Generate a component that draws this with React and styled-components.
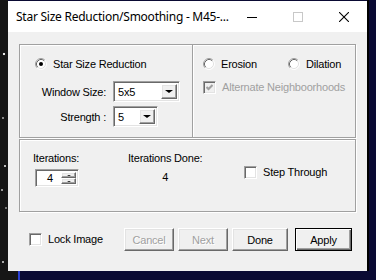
import React from 'react'
import styled, { createGlobalStyle, css } from 'styled-components'

const GlobalStyle = createGlobalStyle`
    html, body {
        margin: 0;
        padding: 0;
        background: #0a0a33;
        overflow: hidden;
    }
    * { box-sizing: border-box; }
`

const Desktop = styled.div`
    width: 376px;
    height: 280px;
    display: flex;
    flex-direction: column;
    background: #0a0a33;
    font-family: 'Liberation Sans', Arial, sans-serif;
    font-size: 11px;
    letter-spacing: -0.2px;
    color: #000;
`

const TopRow = styled.div`
    display: flex;
    height: 271px;
`

const Stars = styled.div`
    width: ${p => p.$width}px;
    flex: none;
    background-color: #161616;
    background-image:
        radial-gradient(circle at 4px 54px, #e8e8e8 0 1px, transparent 1.6px),
        radial-gradient(circle at 3px 118px, #888 0 0.8px, transparent 1.3px),
        radial-gradient(circle at 5px 166px, #bbb 0 0.8px, transparent 1.3px),
        radial-gradient(circle at 2px 190px, #999 0 0.8px, transparent 1.3px),
        radial-gradient(circle at 6px 208px, #777 0 0.8px, transparent 1.3px),
        radial-gradient(circle at 3px 262px, #aaa 0 0.8px, transparent 1.3px);
    background-repeat: no-repeat;
`

const Window = styled.div`
    width: 359px;
    margin-top: 1px;
    display: flex;
    flex-direction: column;
    background: #f0f0f0;
`

const RightEdge = styled.div`
    flex: 1;
    border-left: 2px solid #000;
    background: #0a0a33;
`

const BottomRow = styled.div`
    flex: 1;
    display: flex;
`

const BlueLine = styled.div`
    width: 2px;
    background: #2a3fd0;
`

const TitleBar = styled.div`
    height: 31px;
    flex: none;
    display: flex;
    align-items: center;
    background: #fff;
`

const Title = styled.div`
    flex: 1;
    padding-left: 8px;
    font-family: 'Noto Sans', 'Open Sans', sans-serif;
    font-size: 12px;
    letter-spacing: -0.25px;
    white-space: nowrap;
    overflow: hidden;
`

const CaptionButton = styled.div`
    width: 46px;
    height: 31px;
    display: flex;
    align-items: center;
    justify-content: center;
`

const Body = styled.div`
    flex: 1;
    padding: 12px 11px 0 11px;
    display: flex;
    flex-direction: column;
`

const GroupBox = styled.div`
    border: 1px solid #a0a0a0;
    box-shadow: 1px 1px 0 #fff, inset 1px 1px 0 #fff;
    height: ${p => p.$height}px;
    margin-top: ${p => p.$top || 0}px;
`

const SplitBox = styled(GroupBox)`
    display: grid;
    grid-template-columns: 172px 1fr;
`

const LeftPanel = styled.div`
    padding: 13px 0 0 15px;
`

const RightPanel = styled.div`
    border-left: 1px solid #a0a0a0;
    box-shadow: inset 1px 0 0 #fff;
    padding: 13px 0 0 10px;
`

const OptionRow = styled.div`
    display: flex;
    align-items: center;
    height: 12px;
`

const Option = styled.label`
    display: flex;
    align-items: center;
    gap: 6px;
    width: ${p => (p.$width ? `${p.$width}px` : 'auto')};
    color: ${p => (p.$disabled ? '#a0a0a0' : '#000')};
    white-space: nowrap;
    line-height: 13px;
`

const FieldGrid = styled.div`
    display: grid;
    grid-template-columns: 86px auto;
    column-gap: 7px;
    row-gap: 4px;
    align-items: center;
    margin: 11px 0 0 -15px;
`

const FieldLabel = styled.div`
    text-align: right;
    white-space: nowrap;
`

const sunken = css`
    border: 1px solid;
    border-color: #a0a0a0 #fff #fff #a0a0a0;
    box-shadow: inset 1px 1px 0 #696969, inset -1px -1px 0 #e3e3e3;
`

const raised = css`
    border: 1px solid;
    border-color: #fff #696969 #696969 #fff;
    box-shadow: inset -1px -1px 0 #a0a0a0, inset 1px 1px 0 #e3e3e3;
    background: #f0f0f0;
`

const Combo = styled.div`
    ${sunken};
    width: ${p => p.$width}px;
    height: 21px;
    background: #fff;
    display: flex;
    align-items: stretch;
    padding: 2px;
`

const ComboText = styled.div`
    flex: 1;
    padding-left: 2px;
    display: flex;
    align-items: center;
`

const ComboButton = styled.div`
    ${raised};
    width: 16px;
    display: flex;
    align-items: center;
    justify-content: center;
`

const Arrow = styled.div`
    width: 0;
    height: 0;
    border-left: ${p => p.$size}px solid transparent;
    border-right: ${p => p.$size}px solid transparent;
    ${p => (p.$up ? `border-bottom: ${p.$size - 1}px solid #000;` : `border-top: ${p.$size - 1}px solid #000;`)}
`

const CheckRow = styled.div`
    margin-top: 11px;
`

const Box = styled.span`
    ${sunken};
    width: 13px;
    height: 13px;
    flex: none;
    background: ${p => (p.$disabled ? '#f0f0f0' : '#fff')};
    display: flex;
    align-items: center;
    justify-content: center;
`

const IterGrid = styled.div`
    display: grid;
    grid-template-columns: 95px 116px auto;
    grid-template-rows: 13px 18px;
    row-gap: 4px;
    padding: 12px 0 0 13px;
    line-height: 13px;
`

const Cell = styled.div`
    grid-column: ${p => p.$col};
    grid-row: ${p => p.$row};
`

const DoneCell = styled(Cell)`
    justify-self: start;
    display: flex;
    flex-direction: column;
    align-items: center;
    gap: 6px;
`

const StepCell = styled(Cell)`
    padding-top: 14px;
`

const Spin = styled(Cell)`
    ${sunken};
    margin-left: 2px;
    width: 44px;
    height: 18px;
    background: #fff;
    display: flex;
    padding: 2px;
`

const SpinText = styled.div`
    flex: 1;
    display: flex;
    align-items: center;
    justify-content: center;
    padding-left: 1px;
`

const SpinButtons = styled.div`
    width: 15px;
    display: flex;
    flex-direction: column;
`

const SpinButton = styled.div`
    ${raised};
    flex: 1;
    display: flex;
    align-items: center;
    justify-content: center;
`

const Footer = styled.div`
    margin-top: 16px;
    display: flex;
    align-items: center;
    height: 23px;
    padding-left: 10px;
`

const Buttons = styled.div`
    margin-left: auto;
    margin-right: 4px;
    display: flex;
    gap: 4px;
`

const Button = styled.div`
    ${raised};
    width: ${p => p.$width}px;
    height: 23px;
    display: flex;
    align-items: center;
    justify-content: center;
    color: ${p => (p.$disabled ? '#a0a0a0' : '#000')};
    text-shadow: ${p => (p.$disabled ? '1px 1px 0 #fff' : 'none')};
    ${p =>
        p.$default &&
        css`
            margin-left: 3px;
            border: 1px solid #000;
            box-shadow: inset 1px 1px 0 #fff, inset -1px -1px 0 #696969, inset -2px -2px 0 #a0a0a0;
        `}
`

function Radio({ checked }) {
    return (
        <svg width='12' height='12' viewBox='0 0 12 12'>
            <circle cx='6' cy='6' r='5' fill='#fff' />
            <path d='M2.11 9.89 A5.5 5.5 0 0 1 9.89 2.11' stroke='#a0a0a0' fill='none' />
            <path d='M9.89 2.11 A5.5 5.5 0 0 1 2.11 9.89' stroke='#fff' fill='none' />
            <path d='M2.82 9.18 A4.5 4.5 0 0 1 9.18 2.82' stroke='#696969' fill='none' />
            <path d='M9.18 2.82 A4.5 4.5 0 0 1 2.82 9.18' stroke='#e3e3e3' fill='none' />
            {checked && <circle cx='6' cy='6' r='2' fill='#000' />}
        </svg>
    )
}

function CheckBox({ checked, disabled }) {
    return (
        <Box $disabled={disabled}>
            {checked && (
                <svg width='7' height='7' viewBox='0 0 7 7'>
                    <polyline points='0.5,3 2.5,5 6.5,1' stroke={disabled ? '#a0a0a0' : '#000'} strokeWidth='2' fill='none' />
                </svg>
            )}
        </Box>
    )
}

function ComboBox({ value, width }) {
    return (
        <Combo $width={width}>
            <ComboText>{value}</ComboText>
            <ComboButton>
                <Arrow $size={4} />
            </ComboButton>
        </Combo>
    )
}

export default function App() {
    return (
        <>
            <GlobalStyle />
            <Desktop>
                <TopRow>
                    <Stars $width={8} />
                    <Window>
                        <TitleBar>
                            <Title>Star Size Reduction/Smoothing - M45-...</Title>
                            <CaptionButton>
                                <svg width='10' height='10' viewBox='0 0 10 10'>
                                    <line x1='0' y1='5.5' x2='10' y2='5.5' stroke='#000' />
                                </svg>
                            </CaptionButton>
                            <CaptionButton>
                                <svg width='10' height='10' viewBox='0 0 10 10'>
                                    <rect x='0.5' y='0.5' width='9' height='9' stroke='#c8c8c8' fill='none' />
                                </svg>
                            </CaptionButton>
                            <CaptionButton>
                                <svg width='10' height='10' viewBox='0 0 10 10'>
                                    <path d='M0 0 L10 10 M10 0 L0 10' stroke='#000' strokeWidth='1.1' />
                                </svg>
                            </CaptionButton>
                        </TitleBar>
                        <Body>
                            <SplitBox $height={94}>
                                <LeftPanel>
                                    <OptionRow>
                                        <Option>
                                            <Radio checked />
                                            Star Size Reduction
                                        </Option>
                                    </OptionRow>
                                    <FieldGrid>
                                        <FieldLabel>Window Size:</FieldLabel>
                                        <ComboBox value='5x5' width={67} />
                                        <FieldLabel>Strength :</FieldLabel>
                                        <ComboBox value='5' width={45} />
                                    </FieldGrid>
                                </LeftPanel>
                                <RightPanel>
                                    <OptionRow>
                                        <Option $width={85}>
                                            <Radio />
                                            Erosion
                                        </Option>
                                        <Option>
                                            <Radio />
                                            Dilation
                                        </Option>
                                    </OptionRow>
                                    <CheckRow>
                                        <Option $disabled>
                                            <CheckBox checked disabled />
                                            Alternate Neighboorhoods
                                        </Option>
                                    </CheckRow>
                                </RightPanel>
                            </SplitBox>
                            <GroupBox $height={73} $top={1}>
                                <IterGrid>
                                    <Cell $col='1' $row='1'>Iterations:</Cell>
                                    <Spin $col='1' $row='2'>
                                        <SpinText>4</SpinText>
                                        <SpinButtons>
                                            <SpinButton>
                                                <Arrow $size={2} $up />
                                            </SpinButton>
                                            <SpinButton>
                                                <Arrow $size={2} />
                                            </SpinButton>
                                        </SpinButtons>
                                    </Spin>
                                    <DoneCell $col='2' $row='1 / span 2'>
                                        <div>Iterations Done:</div>
                                        <div>4</div>
                                    </DoneCell>
                                    <StepCell $col='3' $row='1 / span 2'>
                                        <Option>
                                            <CheckBox />
                                            Step Through
                                        </Option>
                                    </StepCell>
                                </IterGrid>
                            </GroupBox>
                            <Footer>
                                <Option>
                                    <CheckBox />
                                    Lock Image
                                </Option>
                                <Buttons>
                                    <Button $width={50} $disabled>Cancel</Button>
                                    <Button $width={50} $disabled>Next</Button>
                                    <Button $width={56}>Done</Button>
                                    <Button $width={57} $default>Apply</Button>
                                </Buttons>
                            </Footer>
                        </Body>
                    </Window>
                    <RightEdge />
                </TopRow>
                <BottomRow>
                    <Stars $width={18} />
                    <BlueLine />
                </BottomRow>
            </Desktop>
        </>
    )
}
